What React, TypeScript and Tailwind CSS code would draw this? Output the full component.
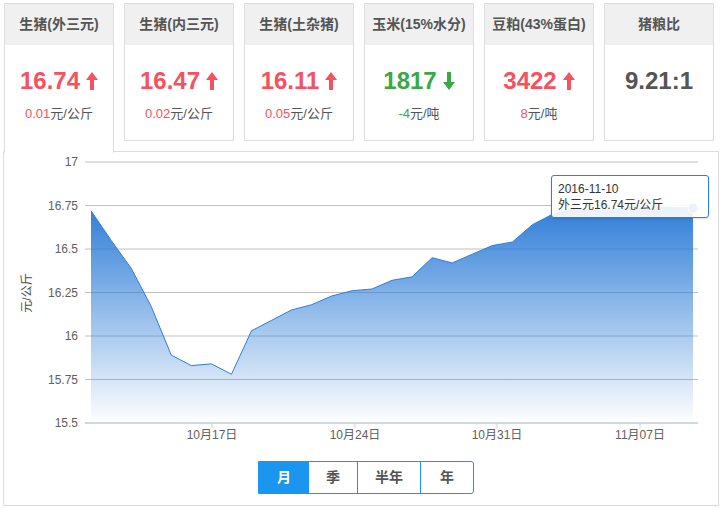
import React from "react"

const font = { fontFamily: '"Liberation Sans", "Noto Sans CJK SC", sans-serif' }

const cards = [
  { title: "生猪(外三元)", value: "16.74", change: "0.01", unit: "元/公斤", dir: "up" },
  { title: "生猪(内三元)", value: "16.47", change: "0.02", unit: "元/公斤", dir: "up" },
  { title: "生猪(土杂猪)", value: "16.11", change: "0.05", unit: "元/公斤", dir: "up" },
  { title: "玉米(15%水分)", value: "1817", change: "-4", unit: "元/吨", dir: "down" },
  { title: "豆粕(43%蛋白)", value: "3422", change: "8", unit: "元/吨", dir: "up" },
  { title: "猪粮比", value: "9.21:1", change: "", unit: "", dir: "" },
]

const data = [
  16.72, 16.55, 16.39, 16.17, 15.89, 15.83, 15.84, 15.78, 16.03, 16.09, 16.15, 16.18, 16.23, 16.26,
  16.27, 16.32, 16.34, 16.45, 16.42, 16.47, 16.52, 16.54, 16.64, 16.7, 16.73, 16.72, 16.73, 16.74,
  16.74, 16.74, 16.74,
]

function Arrow({ dir }: { dir: string }) {
  const color = dir === "up" ? "#f5515f" : "#3aa845"
  return (
    <svg width="12" height="18" viewBox="0 0 12 18" className="ml-1.5">
      {dir === "up" ? (
        <path d="M6 0 L12 8 H8 V18 H4 V8 H0 Z" fill={color} />
      ) : (
        <path d="M6 18 L12 10 H8 V0 H4 V10 H0 Z" fill={color} />
      )}
    </svg>
  )
}

function Chart() {
  const y = (v: number) => 422 - (v - 15.5) * 174
  const x = (i: number) => 90 + (i * (692 - 90)) / (data.length - 1)
  const pts = data.map((v, i) => `${x(i)},${y(v)}`).join(" L")
  const ticks = [17, 16.75, 16.5, 16.25, 16, 15.75, 15.5]
  const xl = [
    { x: 211, t: "10月17日" },
    { x: 354, t: "10月24日" },
    { x: 496, t: "10月31日" },
    { x: 639, t: "11月07日" },
  ]
  return (
    <svg width="715" height="300" className="block">
      <defs>
        <linearGradient id="g" x1="0" y1="0" x2="0" y2="1">
          <stop offset="0" stopColor="#2f7ed8" stopOpacity="1" />
          <stop offset="1" stopColor="#2f7ed8" stopOpacity="0" />
        </linearGradient>
      </defs>
      <g transform="translate(-3,-151)" style={font}>
        {ticks.map((t) => (
          <g key={t}>
            <line x1="84" x2="697" y1={y(t)} y2={y(t)} stroke="#c0c0c0" strokeWidth="1" />
            <text x="77" y={y(t) + 4} textAnchor="end" fontSize="12" fill="#606060">
              {t}
            </text>
          </g>
        ))}
        <path d={`M${pts} L692,422 L90,422 Z`} fill="url(#g)" />
        <path d={`M${pts}`} fill="none" stroke="#2f7ed8" strokeWidth="1" />
        <line x1="84" x2="697" y1="422" y2="422" stroke="#c0d0e0" strokeWidth="1" />
        {xl.map((l) => (
          <g key={l.t}>
            <line x1={l.x} x2={l.x} y1="422" y2="427" stroke="#c0d0e0" />
            <text x={l.x} y="438" textAnchor="middle" fontSize="12" fill="#606060">
              {l.t}
            </text>
          </g>
        ))}
        <text transform="translate(30,292) rotate(-90)" textAnchor="middle" fontSize="12" fill="#4d4d4d">
          元/公斤
        </text>
        <circle cx="692" cy="207" r="5" fill="#2f7ed8" stroke="#fff" strokeWidth="1" />
      </g>
    </svg>
  )
}

export default function App() {
  return (
    <div className="w-[722px] h-[508px] bg-white relative" style={font}>
      <div className="flex gap-[10px] pl-[4px] pt-[3px]">
        {cards.map((c, i) => (
          <div
            key={c.title}
            className={`w-[110px] border border-[#dddddd] bg-white ${i === 0 ? "h-[150px] border-b-0 relative z-10" : "h-[138px]"}`}
          >
            <div className="h-[41px] bg-[#f0f0f0] flex items-center justify-center text-[14px] font-bold text-[#555]">
              {c.title}
            </div>
            <div className="flex items-center justify-center mt-[22px] h-[28px]">
              <span
                className={`text-[24px] font-bold ${c.dir === "up" ? "text-[#f5515f]" : c.dir === "down" ? "text-[#3aa845]" : "text-[#555]"}`}
              >
                {c.value}
              </span>
              {c.dir && <Arrow dir={c.dir} />}
            </div>
            {c.unit && (
              <div className="text-center text-[13px] text-[#555] mt-[9px]">
                <span className={c.dir === "up" ? "text-[#f5515f]" : "text-[#3aa845]"}>{c.change}</span>
                {c.unit}
              </div>
            )}
          </div>
        ))}
      </div>
      <div className="absolute left-[3px] top-[151px] w-[716px] h-[355px] border border-[#dddddd]">
        <Chart />
        <div className="flex justify-center mt-[9px] ml-[10px]">
          <div className="flex h-[33px] border border-[#1a96f0] rounded-r-[3px] text-[14px] font-bold text-[#555]">
            <div className="w-[50px] bg-[#1a96f0] text-white flex items-center justify-center">月</div>
            <div className="w-[49px] flex items-center justify-center border-r border-[#1a96f0]">季</div>
            <div className="w-[63px] flex items-center justify-center border-r border-[#1a96f0]">半年</div>
            <div className="w-[52px] flex items-center justify-center">年</div>
          </div>
        </div>
        <div className="absolute left-[547px] top-[23px] w-[158px] h-[43px] bg-white/90 border border-[#2f7ed8] rounded-[3px] shadow px-[6px] pt-[5px] text-[12px] leading-[16px] text-[#333]">
          <div>2016-11-10</div>
          <div>外三元16.74元/公斤</div>
        </div>
      </div>
    </div>
  )
}
